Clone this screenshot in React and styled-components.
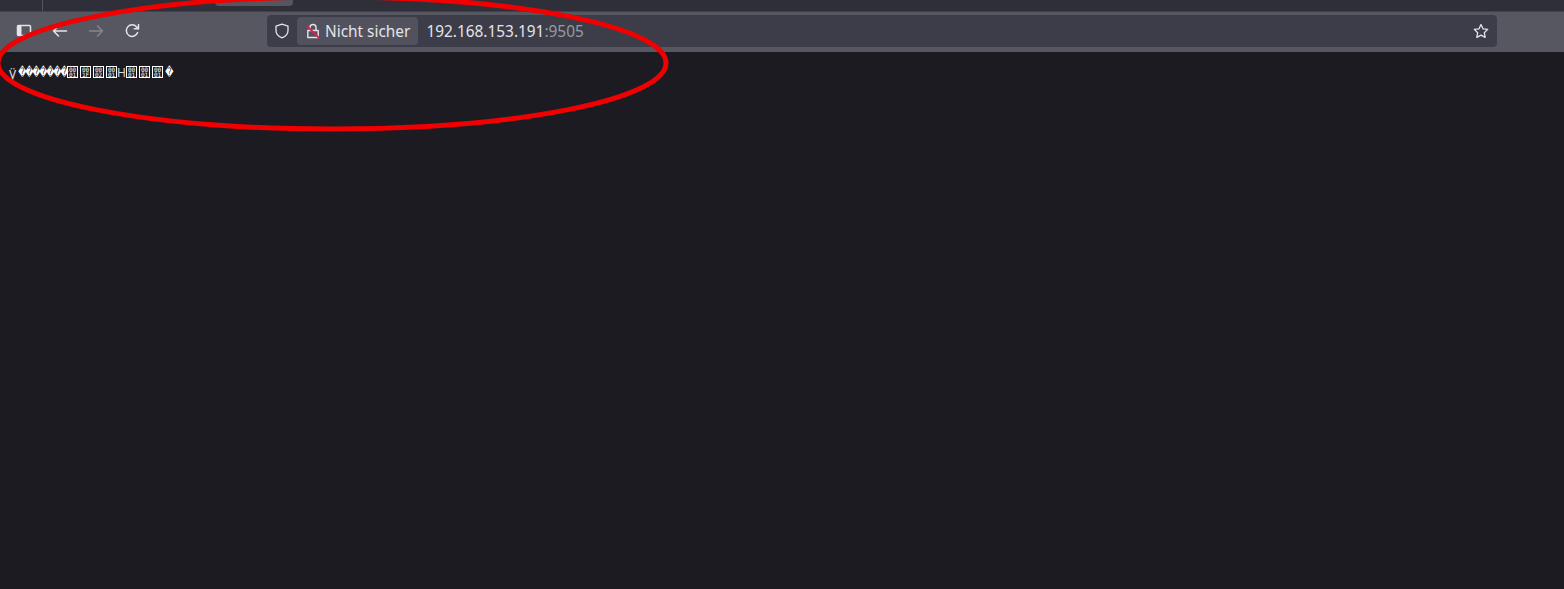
import React from "react"
import styled, { createGlobalStyle } from "styled-components"

const GlobalStyle = createGlobalStyle`
html, body {
    margin: 0;
    height: 100%;
    background: #1c1b22;
    overflow: hidden;
}
#root {
    height: 100%;
}
`

const Hex = ({ code }) => (
    <HexBox>
        <span>00</span>
        <span>{code}</span>
    </HexBox>
)

const App = () => {
    return (
        <Page>
            <GlobalStyle />
            <TabStrip>
                <StripDivider />
                <ActiveTab />
            </TabStrip>
            <Toolbar>
                <NavButtons>
                    <IconSlot>
                        <svg width="16" height="16" viewBox="0 0 16 16" fill="none" stroke="#e4e4e8" strokeWidth="1.5">
                            <path d="M2.5 2.5h11a1 1 0 0 1 1 1v8a1 1 0 0 1-1 1h-11a1 1 0 0 1-1-1v-8a1 1 0 0 1 1-1z" />
                            <rect x="2" y="3" width="3.5" height="9" fill="#e4e4e8" stroke="none" />
                        </svg>
                    </IconSlot>
                    <IconSlot>
                        <svg width="16" height="16" viewBox="0 0 16 16" fill="none" stroke="#e4e4e8" strokeWidth="1.5" strokeLinecap="round" strokeLinejoin="round">
                            <path d="M14.5 8h-13M6.5 3l-5 5 5 5" />
                        </svg>
                    </IconSlot>
                    <IconSlot>
                        <svg width="16" height="16" viewBox="0 0 16 16" fill="none" stroke="#86868c" strokeWidth="1.5" strokeLinecap="round" strokeLinejoin="round">
                            <path d="M1.5 8h13M9.5 3l5 5-5 5" />
                        </svg>
                    </IconSlot>
                    <IconSlot>
                        <svg width="16" height="16" viewBox="0 0 16 16" fill="none" stroke="#e4e4e8" strokeWidth="1.5" strokeLinecap="round" strokeLinejoin="round">
                            <path d="M13.6 9.6A5.8 5.8 0 1 1 12.6 3.9L14.4 5.6" />
                            <path d="M14.5 1.5v4.2h-4.2" />
                        </svg>
                    </IconSlot>
                </NavButtons>
                <UrlBar>
                    <ShieldSlot>
                        <svg width="16" height="16" viewBox="0 0 16 16" fill="none" stroke="#e4e4e8" strokeWidth="1.3" strokeLinejoin="round">
                            <path d="M8 1.2l6 2v4.3c0 3.6-2.6 6-6 7.3-3.4-1.3-6-3.7-6-7.3V3.2z" />
                        </svg>
                    </ShieldSlot>
                    <Identity>
                        <svg width="16" height="16" viewBox="0 0 16 16" fill="none" strokeWidth="1.4">
                            <path d="M5 7.5V4.5a3 3 0 0 1 6 0v3" stroke="#e4e4e8" />
                            <path d="M2.8 7.5h10.4v7H2.8z" stroke="#e4e4e8" strokeLinejoin="round" />
                            <path d="M2 3l12 12" stroke="#c92a52" strokeWidth="1.8" />
                        </svg>
                        <IdentityLabel>Nicht sicher</IdentityLabel>
                    </Identity>
                    <Address>
                        192.168.153.191<Port>:9505</Port>
                    </Address>
                    <StarSlot>
                        <svg width="16" height="16" viewBox="0 0 16 16" fill="none" stroke="#e4e4e8" strokeWidth="1.3" strokeLinejoin="round">
                            <path d="M8 1.5l2 4.3 4.7.6-3.4 3.3.9 4.7L8 12.1l-4.2 2.3.9-4.7-3.4-3.3 4.7-.6z" />
                        </svg>
                    </StarSlot>
                </UrlBar>
            </Toolbar>
            <Body>
                <FirstLetter>ÿ</FirstLetter>
                {Array.from({ length: 7 }, (_, i) => (
                    <Replacement key={i}>�</Replacement>
                ))}
                <Hex code="01" />
                <Hex code="1F" />
                <Hex code="02" />
                <Hex code="01" />
                <Letter>H</Letter>
                <Hex code="01" />
                <Hex code="01" />
                <Hex code="01" />
                <Replacement>�</Replacement>
            </Body>
            <Circle viewBox="0 0 1564 589" width="1564" height="589" fill="none">
                <ellipse cx="332" cy="63" rx="334" ry="66" stroke="#f00000" strokeWidth="5" />
            </Circle>
        </Page>
    )
}

const Page = styled.div`
position: relative;
height: 100%;
background: #1c1b22;
overflow: hidden;
`

const TabStrip = styled.div`
position: relative;
height: 11px;
background: #2f2f3a;
`

const StripDivider = styled.div`
position: absolute;
left: 42px;
top: 0;
bottom: 0;
width: 1px;
background: #55555f;
`

const ActiveTab = styled.div`
position: absolute;
left: 215px;
top: 0;
width: 78px;
height: 6px;
background: #55545f;
border-radius: 0 0 4px 4px;
`

const Toolbar = styled.header`
display: flex;
align-items: center;
height: 41px;
background: #575762;
border-top: 1px solid #42414d;
box-sizing: border-box;
padding: 0 67px 2px 8px;
`

const NavButtons = styled.nav`
display: flex;
gap: 4px;
width: 259px;
flex: none;
`

const IconSlot = styled.div`
display: flex;
align-items: center;
justify-content: center;
width: 32px;
height: 32px;
`

const UrlBar = styled.div`
display: flex;
align-items: center;
flex: 1;
height: 32px;
background: #3c3d48;
border-radius: 4px;
font-family: "Noto Sans", sans-serif;
font-size: 15.4px;
color: #e4e4e8;
`

const ShieldSlot = styled.div`
display: flex;
align-items: center;
justify-content: center;
width: 30px;
height: 30px;
flex: none;
`

const Identity = styled.div`
display: flex;
align-items: center;
gap: 4px;
height: 28px;
padding: 0 8px;
background: #52525e;
border-radius: 4px;
`

const IdentityLabel = styled.span`
color: #e4e4e8;
`

const Address = styled.div`
flex: 1;
padding-left: 8px;
`

const Port = styled.span`
color: #9a9aa2;
`

const StarSlot = styled.div`
display: flex;
align-items: center;
justify-content: center;
width: 32px;
height: 30px;
`

const Body = styled.main`
display: flex;
align-items: center;
height: 14px;
margin: 13px 0 0 8px;
font-family: "Noto Sans", sans-serif;
font-size: 12px;
color: #fff;
white-space: pre;
`

const FirstLetter = styled.span`
flex: none;
width: 8px;
padding-left: 1px;
font-size: 14px;
color: #d8d8dc;
`

const Replacement = styled.span`
flex: none;
display: inline-block;
width: 7px;
text-align: center;
font-family: "DejaVu Sans", sans-serif;
font-size: 12px;
transform: scaleX(0.66);
`

const Letter = styled.span`
flex: none;
display: flex;
justify-content: center;
width: 9px;
margin: 0 -1px;
color: #d8d8dc;
`

const HexBox = styled.span`
flex: none;
display: inline-flex;
flex-direction: column;
align-items: center;
justify-content: center;
box-sizing: border-box;
width: 11px;
height: 12px;
margin: 0 1px;
border: 1px solid #fff;
font-family: "DejaVu Sans Mono", monospace;
font-size: 6px;
line-height: 5px;
color: #fff;
`

const Circle = styled.svg`
position: absolute;
left: 0;
top: 0;
pointer-events: none;
`

export default App
